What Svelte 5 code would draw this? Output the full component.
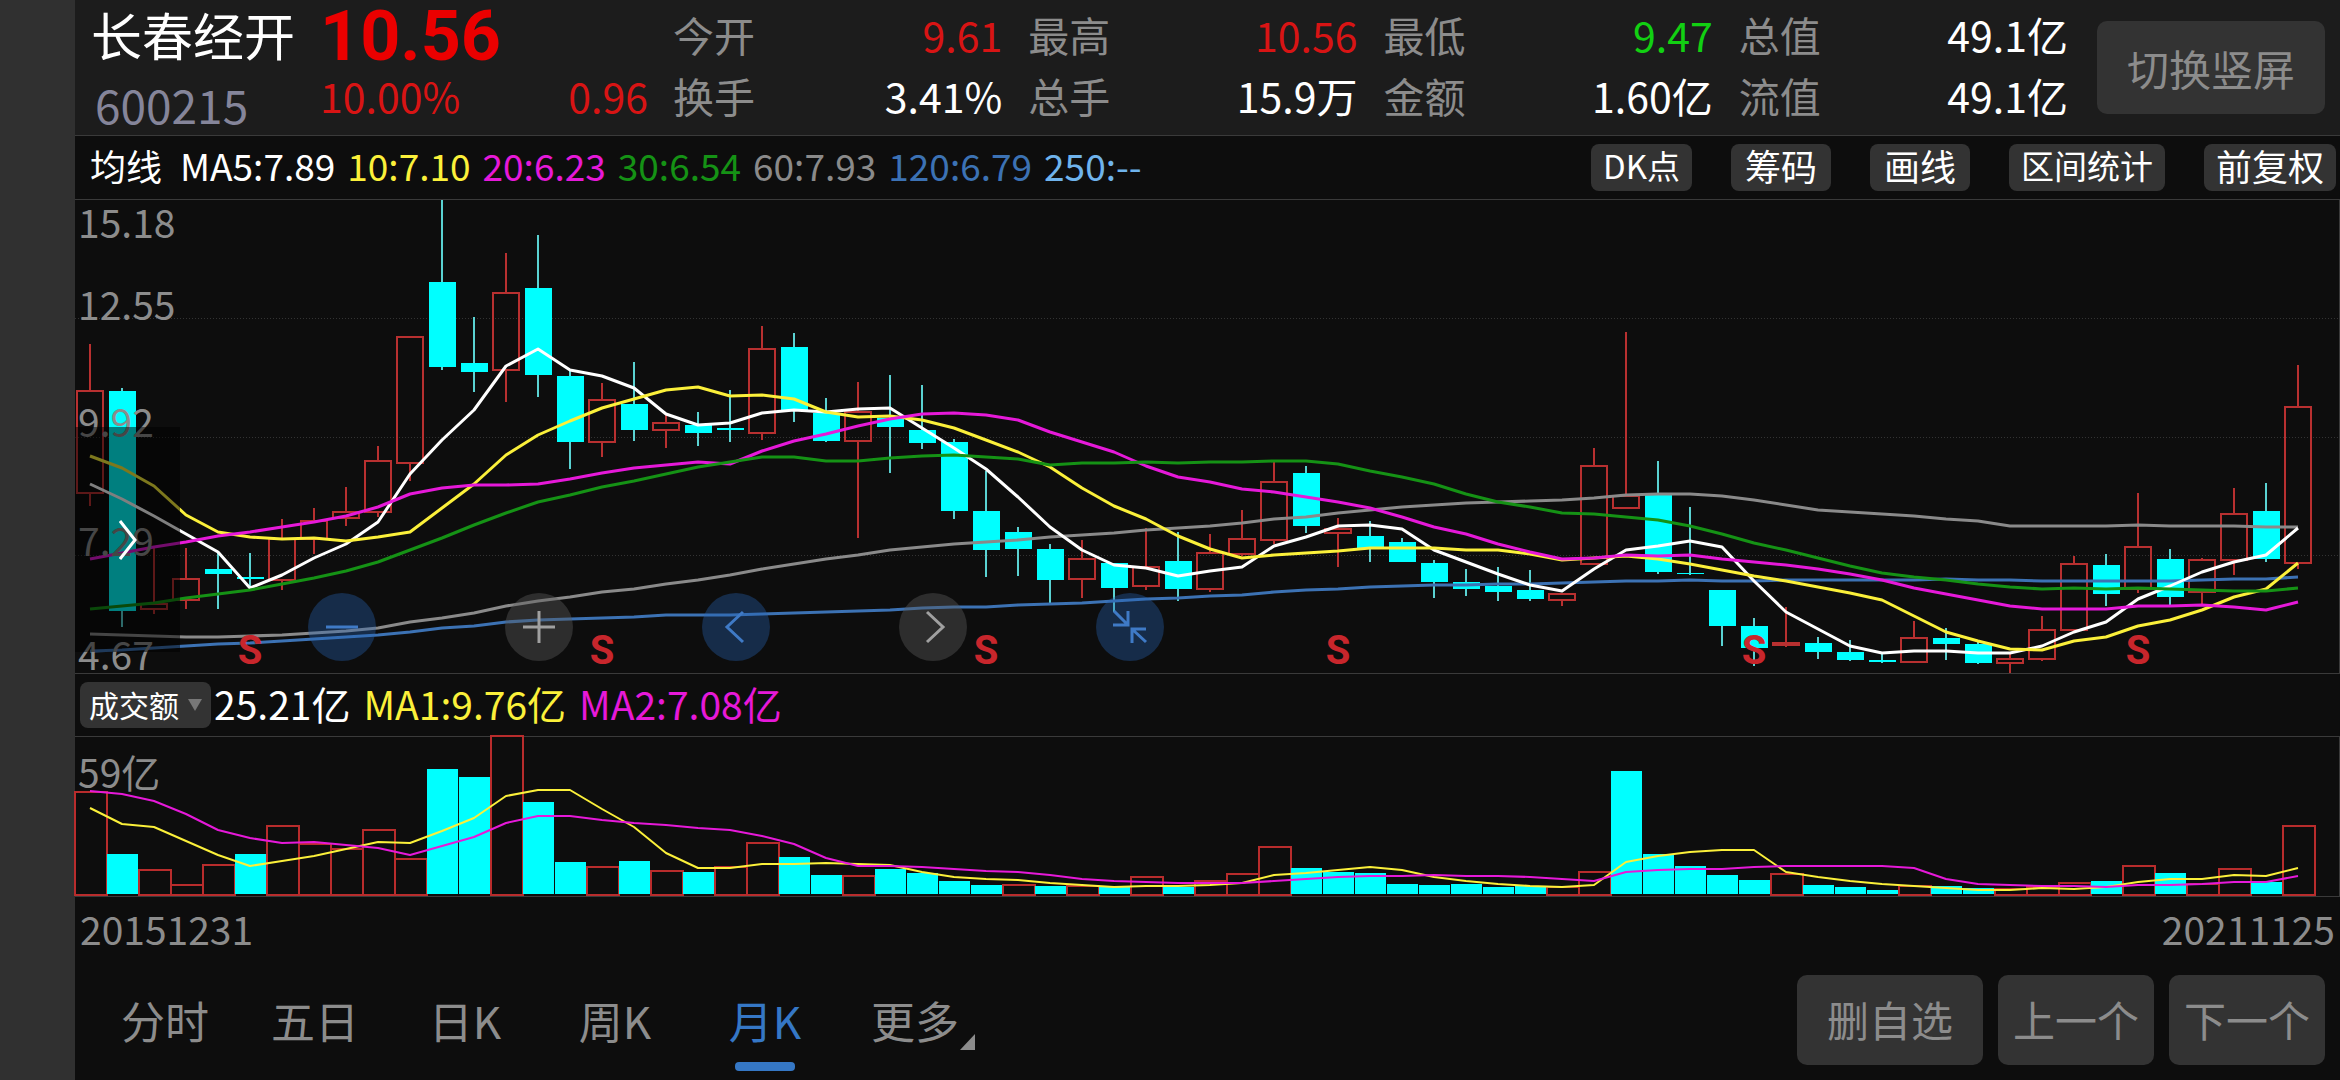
<script>
  /**
   * Landscape K-line screen: quote header, moving averages, candles, turnover.
   * Candle rows are [rising, high, bodyTop, bodyBottom, low] in plot units.
   * Turnover is negative on falling bars.
   */
  const PLOT_HEIGHT = 473;
  const VOLUME_HEIGHT = 159;
  const SLOTS = 2265 / 32;

  const quotes = [
    { label: '今开', value: '9.61', tone: 'up' },
    { label: '最高', value: '10.56', tone: 'up' },
    { label: '最低', value: '9.47', tone: 'down' },
    { label: '总值', value: '49.1亿', tone: '' },
    { label: '换手', value: '3.41%', tone: '' },
    { label: '总手', value: '15.9万', tone: '' },
    { label: '金额', value: '1.60亿', tone: '' },
    { label: '流值', value: '49.1亿', tone: '' },
  ];

  const averages = [
    { text: 'MA5:7.89', tone: 'ma5' },
    { text: '10:7.10', tone: 'ma10' },
    { text: '20:6.23', tone: 'ma20' },
    { text: '30:6.54', tone: 'ma30' },
    { text: '60:7.93', tone: 'ma60' },
    { text: '120:6.79', tone: 'ma120' },
    { text: '250:--', tone: 'ma250' },
  ];

  const tools = [
    { text: 'DK点', compact: true },
    { text: '筹码' },
    { text: '画线' },
    { text: '区间统计', compact: true },
    { text: '前复权' },
  ];
  const tabs = ['分时', '五日', '日K', '周K', '月K', '更多'];

  const axis = [
    { text: '15.18', y: 38 },
    { text: '12.55', y: 120 },
    { text: '9.92', y: 237 },
    { text: '7.29', y: 356 },
    { text: '4.67', y: 470 },
  ];
  const gridLines = [118, 237, 355];
  const signals = [5, 16, 28, 39, 52, 64];

  const candles = [
    [1, 144, 191, 293, 306], [0, 188, 191, 411, 427], [1, 346, 404, 409, 414], [1, 348, 379, 400, 409],
    [0, 352, 369, 374, 409], [0, 353, 377, 379, 387], [1, 319, 339, 380, 390], [1, 308, 321, 339, 354],
    [1, 287, 312, 318, 326], [1, 246, 261, 312, 317], [1, 137, 137, 263, 281], [0, 0, 82, 167, 170],
    [0, 117, 163, 172, 192], [1, 53, 93, 170, 202], [0, 35, 88, 175, 197], [0, 170, 176, 242, 269],
    [1, 183, 200, 242, 257], [0, 162, 204, 230, 241], [1, 214, 223, 230, 248], [0, 212, 225, 233, 246],
    [0, 190, 228, 230, 242], [1, 126, 149, 233, 240], [0, 133, 147, 210, 222], [0, 198, 213, 241, 242],
    [1, 182, 212, 241, 338], [0, 175, 218, 227, 273], [0, 185, 230, 243, 249], [0, 239, 242, 311, 319],
    [0, 271, 311, 350, 377], [0, 327, 332, 349, 376], [0, 344, 349, 380, 404], [1, 340, 359, 379, 398],
    [0, 363, 363, 388, 412], [1, 328, 367, 386, 390], [0, 332, 361, 389, 401], [1, 334, 353, 389, 392],
    [1, 310, 339, 354, 356], [1, 262, 282, 340, 344], [0, 266, 273, 326, 333], [1, 318, 329, 333, 367],
    [0, 321, 336, 348, 362], [0, 338, 342, 362, 362], [0, 360, 363, 382, 398], [0, 369, 382, 389, 396],
    [0, 367, 386, 392, 401], [0, 370, 390, 399, 401], [1, 394, 394, 400, 406], [1, 248, 266, 364, 364],
    [1, 132, 296, 308, 308], [0, 261, 294, 372, 374], [0, 307, 373, 374, 375], [0, 390, 390, 426, 446],
    [0, 418, 426, 448, 466], [1, 407, 443, 445, 447], [0, 437, 443, 452, 459], [0, 440, 452, 460, 461],
    [0, 453, 460, 462, 463], [1, 421, 438, 462, 462], [0, 428, 438, 444, 460], [0, 442, 444, 463, 464],
    [1, 454, 459, 463, 473], [1, 416, 430, 459, 461], [1, 356, 364, 430, 430], [0, 354, 365, 394, 406],
    [1, 293, 347, 389, 393], [0, 349, 359, 397, 405], [1, 358, 360, 392, 404], [1, 288, 314, 360, 375],
    [0, 283, 311, 359, 362], [1, 165, 207, 363, 369],
  ];

  const priceLines = [
    {
      tone: 'ma60',
      ys: [434, 435, 436, 437, 437, 436, 435, 433, 431, 428, 422, 418, 413, 406, 401, 397, 392, 389, 384, 380, 375, 369, 364, 359, 355, 350, 347, 344, 342, 340, 337, 335, 333, 330, 328, 326, 323, 319, 317, 313, 310, 307, 305, 303, 302, 301, 300, 298, 295, 294, 294, 296, 300, 305, 310, 312, 314, 316, 319, 321, 326, 326, 326, 326, 325, 326, 326, 326, 327, 327],
    },
    {
      tone: 'ma120',
      ys: [451, 450, 448, 446, 444, 443, 441, 439, 437, 435, 432, 428, 426, 422, 420, 419, 418, 417, 415, 415, 415, 414, 413, 412, 411, 410, 408, 407, 407, 405, 404, 403, 401, 399, 398, 396, 395, 392, 390, 389, 387, 386, 385, 385, 384, 384, 383, 382, 381, 381, 380, 381, 381, 380, 380, 380, 380, 380, 379, 380, 380, 381, 381, 381, 381, 381, 380, 379, 379, 377],
    },
    {
      tone: 'ma5',
      ys: [284, 299, 316, 334, 352, 388, 375, 358, 344, 322, 274, 240, 210, 166, 149, 170, 176, 188, 214, 225, 223, 213, 210, 212, 209, 208, 228, 248, 269, 297, 327, 350, 365, 368, 376, 371, 367, 346, 337, 326, 325, 329, 350, 362, 374, 385, 391, 369, 350, 346, 341, 347, 381, 412, 429, 446, 453, 451, 451, 453, 453, 446, 432, 422, 399, 386, 372, 362, 355, 328],
    },
    {
      tone: 'ma10',
      ys: [256, 268, 286, 315, 332, 337, 339, 338, 341, 337, 332, 308, 284, 255, 235, 221, 208, 199, 190, 187, 196, 195, 199, 212, 217, 216, 220, 228, 240, 252, 267, 288, 306, 319, 336, 349, 358, 355, 353, 351, 348, 348, 348, 350, 350, 354, 360, 358, 356, 359, 364, 370, 376, 381, 387, 393, 400, 416, 432, 441, 449, 450, 441, 437, 426, 420, 410, 397, 389, 363],
    },
    {
      tone: 'ma20',
      ys: [359, 353, 347, 342, 336, 332, 327, 322, 316, 307, 294, 288, 285, 285, 284, 279, 273, 268, 265, 262, 264, 251, 241, 234, 226, 219, 214, 213, 215, 220, 232, 242, 252, 266, 277, 282, 289, 292, 297, 302, 308, 317, 327, 334, 344, 352, 359, 358, 355, 356, 355, 359, 362, 365, 369, 374, 380, 388, 394, 400, 406, 409, 409, 409, 406, 406, 405, 407, 410, 402],
    },
    {
      tone: 'ma30',
      ys: [409, 406, 403, 398, 394, 390, 384, 378, 371, 362, 350, 338, 325, 313, 302, 295, 287, 281, 274, 267, 262, 257, 257, 261, 261, 258, 256, 255, 257, 259, 265, 263, 263, 262, 263, 262, 262, 261, 261, 264, 271, 277, 284, 294, 302, 307, 313, 314, 317, 320, 326, 334, 343, 350, 358, 366, 373, 377, 380, 384, 387, 389, 388, 389, 388, 389, 390, 391, 391, 388],
    },
  ];

  const volumes = [
    103, -40, 25, 10, 30, -40, 69, 51, 46, 65, 36, -125, -117, 159, -92, -32, 28, -33, 24, -22, 28, 52, -37, -19, 19,
    -25, -21, -13, -9, 10, -8, 9, -7, 18, -7, 14, 21, 48, -26, -22, -21, -10, -9, -10, -7, -8, 8, 23, -123, -40, -28,
    -19, -14, 21, -9, -7, -4, 9, -8, -6, 6, 8, 12, -13, 29, -21, 11, 26, -12, 69,
  ];

  const volumeLines = [
    {
      tone: 'ma10',
      ys: [71, 87, 90, 104, 118, 129, 124, 119, 112, 105, 106, 94, 81, 59, 53, 53, 72, 90, 116, 131, 131, 127, 127, 126, 127, 128, 135, 140, 142, 143, 146, 148, 150, 149, 149, 148, 146, 138, 136, 133, 130, 133, 140, 144, 147, 149, 150, 148, 125, 119, 115, 113, 113, 135, 140, 144, 147, 149, 151, 153, 153, 151, 152, 150, 145, 142, 142, 138, 139, 131],
    },
    {
      tone: 'ma20',
      ys: [54, 57, 64, 77, 93, 101, 106, 105, 108, 111, 118, 109, 100, 86, 79, 79, 83, 86, 88, 91, 93, 99, 107, 121, 129, 129, 130, 132, 134, 135, 138, 142, 144, 145, 146, 146, 146, 144, 142, 140, 139, 139, 138, 139, 139, 140, 142, 144, 135, 133, 132, 132, 130, 129, 129, 129, 129, 131, 142, 147, 148, 149, 149, 150, 148, 148, 147, 145, 145, 139],
    },
  ];

  let chartWidth = $state(2265);
  let activeTab = $state('月K');
  let indicator = $state('成交额');

  let step = $derived(chartWidth / SLOTS);
  let half = $derived(Math.floor(step * 0.42));

  function xAt(i) {
    return Math.round((i + 0.5) * step) - 1;
  }

  function toPoints(ys) {
    return ys.map((y, i) => `${xAt(i)},${y}`).join(' ');
  }
</script>

<div class="screen">
  <aside class="gutter"></aside>
  <main>
    <header class="quote">
      <div class="identity">
        <h1>长春经开</h1>
        <p class="code">600215</p>
      </div>
      <div class="price">
        <strong>10.56</strong>
        <p><span>10.00%</span><span>0.96</span></p>
      </div>
      <dl class="stats">
        {#each quotes as quote}
          <div>
            <dt>{quote.label}</dt>
            <dd class={quote.tone}>{quote.value}</dd>
          </div>
        {/each}
      </dl>
      <button type="button" class="rotate">切换竖屏</button>
    </header>

    <section class="legend">
      <span class="legend-title">均线</span>
      {#each averages as avg}
        <span class={avg.tone}>{avg.text}</span>
      {/each}
      <div class="tools">
        {#each tools as tool}
          <button type="button" class:compact={tool.compact}>{tool.text}</button>
        {/each}
      </div>
    </section>

    <section class="plot" bind:clientWidth={chartWidth}>
      <svg width="100%" height={PLOT_HEIGHT} role="img" aria-label="月K线图">
        {#each gridLines as y}
          <line class="grid" x1="0" x2="100%" y1={y + 0.5} y2={y + 0.5} />
        {/each}

        {#each candles as [rising, high, top, bottom, low], i}
          {@const x = xAt(i)}
          {#if rising}
            <g class="rise">
              <line x1={x} x2={x} y1={high} y2={top} />
              <line x1={x} x2={x} y1={bottom} y2={low} />
              <rect x={x - half} y={top} width={half * 2} height={bottom - top} />
            </g>
          {:else}
            <g class="fall">
              <line x1={x} x2={x} y1={high} y2={low} />
              <rect x={x - half} y={top} width={half * 2 + 1} height={bottom - top} />
            </g>
          {/if}
        {/each}

        {#each priceLines as line}
          <polyline class="line {line.tone}" points={toPoints(line.ys)} />
        {/each}

        {#each axis as tick}
          <text class="axis" x="3" y={tick.y}>{tick.text}</text>
        {/each}
        {#each signals as i}
          <text class="signal" x={xAt(i)} y="464">S</text>
        {/each}
      </svg>

      <button type="button" class="drawer" aria-label="展开">
        <svg width="18" height="40" viewBox="0 0 18 40"><path d="M1 1 16 20 1 39" /></svg>
      </button>

      <div class="controls">
        <button type="button" class="blue" aria-label="缩小">
          <svg viewBox="0 0 68 68"><path d="M18 34H50" /></svg>
        </button>
        <button type="button" aria-label="放大">
          <svg viewBox="0 0 68 68"><path d="M18 34H50M34 18V50" /></svg>
        </button>
        <button type="button" class="blue" aria-label="左移">
          <svg viewBox="0 0 68 68"><path d="M41 19 25 34 41 49" /></svg>
        </button>
        <button type="button" aria-label="右移">
          <svg viewBox="0 0 68 68"><path d="M28 19 44 34 28 49" /></svg>
        </button>
        <button type="button" class="blue" aria-label="收起">
          <svg viewBox="0 0 68 68"><path d="M18 18 31 31M17 32H32V18M50 49 37 37M36 50V36H50" /></svg>
        </button>
      </div>
    </section>

    <section class="turnover">
      <label class="picker">
        <select bind:value={indicator} aria-label="指标">
          <option>成交额</option>
          <option>成交量</option>
        </select>
        <svg width="14" height="12" viewBox="0 0 14 12" aria-hidden="true"><path d="M0 0H14L7 12Z" /></svg>
      </label>
      <span>25.21亿</span>
      <span class="ma10">MA1:9.76亿</span>
      <span class="ma20">MA2:7.08亿</span>
    </section>

    <section class="plot volume">
      <svg width="100%" height={VOLUME_HEIGHT} role="img" aria-label="成交额">
        <text class="axis" x="3" y="51">59亿</text>
        {#each volumes as amount, i}
          {@const size = Math.abs(amount)}
          {@const left = Math.round(i * step)}
          {#if amount > 0}
            <rect class="bar-up" x={left} y={VOLUME_HEIGHT - size - 1} width={Math.round(step)} height={size} />
          {:else}
            <rect class="bar-down" x={left} y={VOLUME_HEIGHT - size - 2} width={Math.round(step) - 1} height={size} />
          {/if}
        {/each}
        {#each volumeLines as line}
          <polyline class="line thin {line.tone}" points={toPoints(line.ys)} />
        {/each}
      </svg>
    </section>

    <div class="dates">
      <time datetime="2015-12-31">20151231</time>
      <time datetime="2021-11-25">20211125</time>
    </div>

    <footer>
      <nav>
        {#each tabs as tab}
          <button type="button" class:active={tab === activeTab} onclick={() => (activeTab = tab)}>
            {tab}
            {#if tab === '更多'}
              <svg class="corner" width="15" height="16" viewBox="0 0 15 16" aria-hidden="true"><path d="M15 0V16H0Z" /></svg>
            {/if}
          </button>
        {/each}
      </nav>
      <div class="actions">
        <button type="button" class="wide">删自选</button>
        <button type="button">上一个</button>
        <button type="button">下一个</button>
      </div>
    </footer>
  </main>
</div>

<style>
  :global(body) {
    margin: 0;
    background: #0d0d0d;
  }

  .screen {
    display: flex;
    min-height: 100vh;
    background: #0d0d0d;
    color: #fff;
    font-family: 'Noto Sans CJK SC', sans-serif;
    white-space: nowrap;
  }

  .gutter {
    flex: 0 0 75px;
    background: #303030;
  }

  main {
    flex: 1;
    min-width: 0;
  }

  h1,
  p,
  dl,
  dd {
    margin: 0;
  }

  button,
  select {
    border: none;
    padding: 0;
    font-family: inherit;
    color: inherit;
    background: #333;
    cursor: pointer;
  }

  .quote {
    display: flex;
    box-sizing: border-box;
    height: 136px;
    padding: 4px 15px 0 16px;
    background: #1c1c1c;
    border-bottom: 1px solid #3a3a3a;
    font-size: 41px;
    line-height: 61px;
  }

  .identity {
    flex: 0 0 229px;
  }

  h1 {
    font-size: 51px;
    font-weight: 400;
    line-height: 61px;
  }

  .code {
    padding: 12px 0 0 4px;
    color: #85859a;
    font-size: 46px;
    line-height: 54px;
  }

  .price {
    flex: 0 0 328px;
    color: #d81414;
  }

  .price strong {
    display: block;
    margin-bottom: -4px;
    color: #eb0000;
    font-family: Roboto, sans-serif;
    font-size: 70px;
    line-height: 65px;
  }

  .price p {
    display: flex;
    justify-content: space-between;
  }

  .stats {
    flex: 1;
    display: grid;
    grid-template-columns: repeat(4, 1fr);
    column-gap: 26px;
    margin: 0 29px 0 25px;
    align-content: start;
  }

  .stats div {
    display: flex;
    justify-content: space-between;
  }

  dt {
    color: #8c8c8c;
  }

  .up {
    color: #d81414;
  }

  .down {
    color: #12d012;
  }

  .rotate {
    flex: 0 0 228px;
    height: 93px;
    margin-top: 17px;
    border-radius: 10px;
    color: #8c8c8c;
    font-size: 42px;
  }

  .legend {
    display: flex;
    align-items: center;
    gap: 12px;
    height: 63px;
    padding: 0 4px 0 15px;
    font-size: 37px;
  }

  .legend > span,
  .turnover > span {
    padding-bottom: 5px;
  }

  .legend-title {
    margin-right: 6px;
    font-size: 36px;
  }

  .tools {
    display: flex;
    gap: 39px;
    margin-left: auto;
  }

  .tools button {
    min-width: 100px;
    height: 47px;
    padding: 0 12px 4px;
    border-radius: 8px;
    font-size: 36px;
    line-height: 43px;
  }

  .tools .compact {
    font-size: 33px;
  }

  .ma5 {
    color: #fff;
    stroke: #fff;
  }

  .ma10 {
    color: #fbf03a;
    stroke: #fbf03a;
  }

  .ma20 {
    color: #e619d9;
    stroke: #e619d9;
  }

  .ma30 {
    color: #159215;
    stroke: #159215;
  }

  .ma60 {
    color: #8a8a8a;
    stroke: #8a8a8a;
  }

  .ma120 {
    color: #3c72b4;
    stroke: #3c72b4;
  }

  .ma250 {
    color: #6fb3ec;
  }

  .plot {
    position: relative;
    border-top: 1px solid #3a3a3a;
    border-bottom: 1px solid #3a3a3a;
    box-shadow: inset -1px 0 #3a3a3a;
  }

  .plot > svg {
    display: block;
    overflow: visible;
  }

  .grid {
    stroke: #333;
    stroke-dasharray: 1 2;
  }

  .rise line,
  .rise rect {
    fill: none;
    stroke: #b83030;
    stroke-width: 2;
  }

  .fall line {
    stroke: #5ad2d2;
    stroke-width: 2;
  }

  .fall rect,
  .bar-down {
    fill: #00ffff;
  }

  .bar-up {
    fill: none;
    stroke: #b82c2c;
    stroke-width: 2;
  }

  .line {
    fill: none;
    stroke-width: 3;
    stroke-linejoin: round;
  }

  .thin {
    stroke-width: 2;
  }

  .axis {
    fill: #8c8c8c;
    font-size: 39px;
  }

  .signal {
    fill: #c8262c;
    font-family: Roboto, sans-serif;
    font-size: 40px;
    font-weight: 700;
    text-anchor: middle;
  }

  /* Floating handle over the left edge of the candles */
  .drawer {
    position: absolute;
    top: 227px;
    left: 0;
    width: 105px;
    height: 225px;
    background: rgba(0, 0, 0, 0.5);
  }

  .drawer svg {
    display: block;
    margin: 0 auto;
    fill: none;
    stroke: #fff;
    stroke-width: 3;
  }

  .controls {
    position: absolute;
    bottom: 12px;
    left: 233px;
    display: flex;
    gap: 129px;
  }

  .controls button {
    width: 68px;
    height: 68px;
    border-radius: 50%;
    background: rgba(90, 90, 90, 0.42);
    color: #a0a0a0;
  }

  .controls .blue {
    background: rgba(40, 100, 180, 0.36);
    color: #3f7ac6;
  }

  .controls svg {
    display: block;
    fill: none;
    stroke: currentColor;
    stroke-width: 3;
  }

  .turnover {
    display: flex;
    align-items: center;
    gap: 13px;
    height: 62px;
    padding-left: 5px;
    font-size: 39px;
  }

  .picker {
    position: relative;
    margin-right: -10px;
  }

  .picker select {
    display: block;
    width: 131px;
    height: 46px;
    padding: 0 0 4px 9px;
    border-radius: 8px;
    appearance: none;
    font-size: 30px;
  }

  .picker svg {
    position: absolute;
    top: 17px;
    right: 9px;
    fill: #777;
    pointer-events: none;
  }

  .dates {
    display: flex;
    justify-content: space-between;
    padding: 0 5px;
    color: #8c8c8c;
    font-size: 39px;
    line-height: 63px;
  }

  footer {
    display: flex;
    justify-content: space-between;
    align-items: flex-start;
    padding: 15px 15px 0;
  }

  nav {
    display: flex;
  }

  nav button {
    position: relative;
    width: 150px;
    height: 96px;
    padding-bottom: 6px;
    background: none;
    color: #8c8c8c;
    font-size: 44px;
    line-height: 90px;
  }

  nav .active {
    color: #3577c5;
  }

  nav .active::after {
    content: '';
    position: absolute;
    bottom: 0;
    left: 45px;
    width: 60px;
    height: 9px;
    border-radius: 4px;
    background: #3577c5;
  }

  .corner {
    position: absolute;
    right: 15px;
    bottom: 21px;
    fill: #8c8c8c;
  }

  .actions {
    display: flex;
    gap: 15px;
  }

  .actions button {
    width: 156px;
    height: 90px;
    padding-bottom: 4px;
    border-radius: 10px;
    color: #8c8c8c;
    font-size: 42px;
  }

  .actions .wide {
    width: 186px;
  }
</style>
